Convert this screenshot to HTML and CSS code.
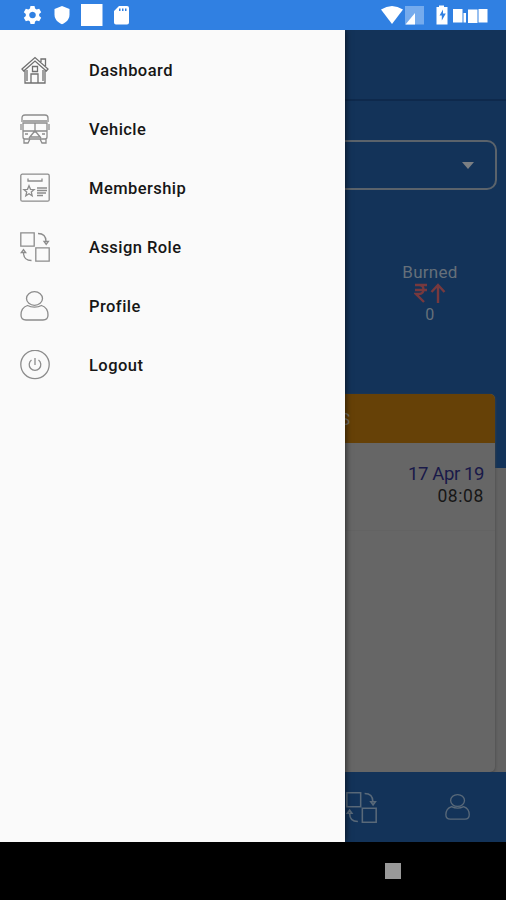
FILE: index.html
```html
<!DOCTYPE html>
<html lang="en">
<head>
<meta charset="utf-8">
<title>Dashboard</title>
<link rel="stylesheet" href="styles.css">
</head>
<body>
<svg class="defs" aria-hidden="true">
  <symbol id="swap" viewBox="0 0 30 30">
    <path d="M.8.8h13.400v13.400H.8zM15.800 15.800h13.400v13.400H15.800zM18 1.500c5 0 8 3 8 8M11.500 28.500c-5 0-8-3-8-8"/>
    <path class="tip" d="M24 9.500h4.400L26.200 12.500zM1.300 20.500h4.400L3.500 17.500z"/>
  </symbol>
  <symbol id="person" viewBox="0 0 30 30">
    <ellipse cx="14.500" cy="7.500" rx="8" ry="6.800"/>
    <path d="M7.500 14.500C3 16 1 19 1 24q0 5 5 5h17q5 0 5-5c0-5-2-8-6.500-9.500-4 2-10 2-14 0z"/>
  </symbol>
</svg>
<div class="phone">
  <header class="status">
    <svg class="left" viewBox="0 0 140 30">
      <path fill-rule="evenodd" d="M30.500 6h4l.6 2.600 1.500.9 2.600-.8 2 3.500-2 1.800v2l2 1.800-2 3.500-2.600-.8-1.500.9-.6 2.600h-4l-.6-2.600-1.500-.9-2.600.8-2-3.500 2-1.800v-2l-2-1.800 2-3.500 2.600.8 1.500-.9zM32.500 11.700a3.300 3.300 0 1 0 .01 0z"/>
      <path d="M62 6l7.500 3v5.500c0 4.500-3 8-7.500 9.700-4.500-1.700-7.500-5.200-7.500-9.700V9z"/>
      <path d="M81 4h21.500v22H81z"/>
      <path fill-rule="evenodd" d="M119 6h8q2 0 2 2v14.500q0 2-2 2h-11q-2 0-2-2V11zM119 8.500v2.500h1.500v-2.500zm3 0v2.500h1.500v-2.500zm3 0v2.500h1.500v-2.500z"/>
    </svg>
    <svg class="right" viewBox="0 0 130 30">
      <path d="M5 9.500q11-7 22 0L16 24z"/>
      <path class="faint" d="M29 6h19v18.500H29z"/>
      <path d="M29.500 24.500 39 13v11.500z"/>
      <path fill-rule="evenodd" d="M60.500 7H63V5.500h5V7h3.500v17.500H60.500zM67 9.500l-3.500 6h2.300v5l4-7h-2.800z"/>
      <path d="M77 9h9.500v13.500H77zM87.500 13h2.500v9.500h-2.500zM92 9.500h9.500v13.500H92zM102.500 9h9v13.500h-9z"/>
    </svg>
  </header>
  <main class="screen">
    <section class="hero">
      <div class="appbar"></div>
      <div class="select"><i class="caret"></i></div>
      <div class="burned">
        <span>Burned</span>
        <svg viewBox="0 0 32 21"><path d="M1 2h12M1 7h12M1 2h4c6 0 6 9 0 9H2l8 8"/><path d="M24 20V2M17.500 9 24 2l6.500 7"/></svg>
        <span class="count">0</span>
      </div>
    </section>
    <section class="card">
      <div class="card-head">TRANSACTIONS</div>
      <div class="entry"><span class="date">17 Apr 19</span><span class="time">08:08</span></div>
    </section>
    <footer class="tabs">
      <svg class="tab-swap"><use href="#swap"/></svg>
      <svg class="tab-person"><use href="#person"/></svg>
    </footer>
    <nav class="drawer">
      <a class="item"><svg class="home" viewBox="0 0 30 30"><path d="M2 14 15 2.500 28 14l-1.700 2L15 6 3.700 16zM5 15.500V28h20V15.500M11 28v-9h7v9M12.500 11.500h5v5h-5zM21 7V4h4.500v7M7 15v11M23 15v11"/></svg><span>Dashboard</span></a>
      <a class="item"><svg viewBox="0 0 30 30"><path d="M2 8V4q0-3 3-3h20q3 0 3 3v4M3 9h24v14q0 2-2 2H5q-2 0-2-2zM3 7h24M15 9v8M3 17h24M4 25v4h4l2-4M26 25v4h-4l-2-4M9 24l5-6h2l5 6M1 10v6M29 10v6M5 20h3M22 20h3M10 23h10"/></svg><span>Vehicle</span></a>
      <a class="item"><svg viewBox="0 0 30 30"><rect x=".8" y="1.200" width="28.400" height="27" rx="1.500"/><path d="M8 5.500v2.500h14V5.500M9 12.700l1.500 3.600 3.700.3-2.900 2.500.9 3.700L9 20.800l-3.200 2 .9-3.700-2.900-2.500 3.700-.3zM17 15h10M17 17.500h10M17 20h9M17 22.500h6"/></svg><span>Membership</span></a>
      <a class="item"><svg><use href="#swap"/></svg><span>Assign Role</span></a>
      <a class="item"><svg><use href="#person"/></svg><span>Profile</span></a>
      <a class="item"><svg viewBox="0 0 30 30"><circle cx="15" cy="14.500" r="14.200"/><path d="M15 8V15M11.500 10a5.800 5.800 0 1 0 7 0"/></svg><span>Logout</span></a>
    </nav>
  </main>
  <div class="sysnav"><i class="recent"></i></div>
</div>
</body>
</html>
```

FILE: styles.css
```css
* { box-sizing: border-box; }
body { margin: 0; font-family: Roboto, "Liberation Sans", sans-serif; }
.defs { position: absolute; width: 0; height: 0; }
.phone { width: 506px; height: 900px; display: flex; flex-direction: column; overflow: hidden; background: #000; }
.status { height: 30px; flex: none; display: flex; justify-content: space-between; background: #3080e2; }
.status svg { height: 30px; fill: #fff; }
.left { width: 140px; }
.right { width: 130px; }
.status .faint { fill: #75abed; }

.screen { position: relative; height: 812px; flex: none; display: flex; flex-direction: column; overflow: hidden; background: linear-gradient(#133359 438px, #626262 438px); }
.hero { height: 364px; display: flex; flex-direction: column; }
.appbar { height: 71px; border-bottom: 2px solid #0e294c; }
.select { height: 50px; margin: 39px 9px 0; border: 2px solid #5b636b; border-radius: 10px; display: flex; align-items: center; justify-content: flex-end; padding-right: 21px; }
.caret { border: 6.5px solid transparent; border-top: 7px solid #7b7f83; border-bottom: 0; }
.burned { align-self: flex-end; width: 152px; margin-top: 72px; display: flex; flex-direction: column; align-items: center; font-size: 17px; letter-spacing: .3px; line-height: 20px; color: #66707a; }
.burned svg { width: 32px; height: 21px; margin-top: 1px; fill: none; stroke: #77393e; stroke-width: 2.4; }
.count { margin-top: 1px; font-size: 16px; line-height: 19px; }

.card { height: 378px; margin: 0 11px; background: #666; border-radius: 5px; box-shadow: 0 1px 3px #444; overflow: hidden; }
.card-head { height: 49px; padding: 16px 145px 0 0; text-align: right; font-size: 16px; line-height: 20px; color: #77726a; background: #664107; }
.entry { height: 88px; padding: 20px 11px 0; display: flex; flex-direction: column; align-items: flex-end; border-bottom: 1px solid #636363; }
.date { font-size: 18.5px; letter-spacing: -.4px; line-height: 22px; color: #191949; }
.time { font-size: 17.500px; letter-spacing: .6px; line-height: 23px; color: #171717; }

.tabs { height: 70px; display: flex; justify-content: flex-end; align-items: center; gap: 68px; padding-right: 35px; background: #133359; }
.tabs svg { fill: none; stroke: #596979; stroke-width: 1.500; }
.tab-swap { width: 31px; height: 31px; }
.tab-person { width: 26px; height: 30px; }

.drawer { position: absolute; left: 0; top: 0; width: 345px; height: 812px; padding-top: 10px; background: #fafafa; box-shadow: 1px 0 6px rgba(0, 0, 0, .6); }
.item { height: 59px; padding-left: 20px; display: flex; align-items: center; gap: 39px; font-size: 16.5px; font-weight: 500; letter-spacing: .45px; color: #161616; }
.item span { padding-top: 2px; }
.item svg { width: 30px; height: 30px; fill: none; stroke: #8c8c8c; stroke-width: 1.3; }
.item .home { stroke: #707070; }

.sysnav { flex: 1; display: flex; align-items: center; justify-content: flex-end; padding-right: 105px; background: #000; }
.recent { width: 16px; height: 16px; background: #999; }
```
